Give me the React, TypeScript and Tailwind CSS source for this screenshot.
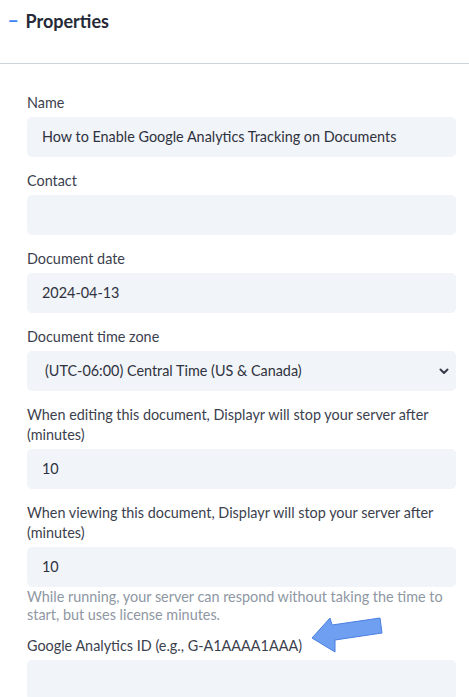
import React from 'react';

const Label = ({ children }: { children: React.ReactNode }) => (
  <label className="block text-[14.4px] leading-[20px] text-[#3c3f4e] mb-[4px]">{children}</label>
);

const Field = ({ label, value }: { label: string; value?: string }) => (
  <div className="mt-[14px] first:mt-0">
    <Label>{label}</Label>
    <div className="h-[40px] rounded-[5px] bg-[#f1f4f8] px-[15px] flex items-center text-[14.4px] text-[#2f3240]">
      {value}
    </div>
  </div>
);

export default function App() {
  return (
    <div className="w-[469px] h-[697px] overflow-hidden bg-white font-['Lato',sans-serif]">
      <div className="h-[64px] border-b border-[#cdd3dc] flex items-start pt-[8px] pl-[8px]">
        <span className="text-[#3b82f6] text-[18px] font-bold leading-[26px] mr-[7px]">−</span>
        <h2 className="text-[18px] font-bold leading-[26px] text-[#252a36]">Properties</h2>
      </div>
      <div className="pl-[27px] pr-[13px] pt-[29px]">
        <Field label="Name" value="How to Enable Google Analytics Tracking on Documents" />
        <Field label="Contact" />
        <Field label="Document date" value="2024-04-13" />
        <div className="mt-[14px]">
          <Label>Document time zone</Label>
          <div className="h-[40px] rounded-[5px] bg-[#f1f4f8] pl-[18px] pr-[6px] flex items-center justify-between text-[14.4px] text-[#2f3240]">
            <span>(UTC-06:00) Central Time (US &amp; Canada)</span>
            <svg width="12" height="12" viewBox="0 0 12 12" fill="none">
              <path d="M2.5 4.5 L6 8 L9.5 4.5" stroke="#3a3d4a" strokeWidth="2" strokeLinecap="round" strokeLinejoin="round" />
            </svg>
          </div>
        </div>
        <Field label="When editing this document, Displayr will stop your server after (minutes)" value="10" />
        <Field label="When viewing this document, Displayr will stop your server after (minutes)" value="10" />
        <p className="text-[14.4px] leading-[18px] text-[#8e97a3] mt-[1px]">
          While running, your server can respond without taking the time to start, but uses license minutes.
        </p>
        <div className="mt-[12px] relative">
          <Label>Google Analytics ID (e.g., G-A1AAAA1AAA)</Label>
          <div className="h-[40px] rounded-[5px] bg-[#f1f4f8]" />
          <svg className="absolute left-[273px] top-[-26px]" width="90" height="50" viewBox="0 0 90 50">
            <polygon
              points="12,28 30,8 32,15 80,8 82,23 35,30 35,42"
              fill="#6f9ff0"
              stroke="#4a7fe3"
              strokeWidth="1"
              strokeLinejoin="round"
            />
          </svg>
        </div>
      </div>
    </div>
  );
}
